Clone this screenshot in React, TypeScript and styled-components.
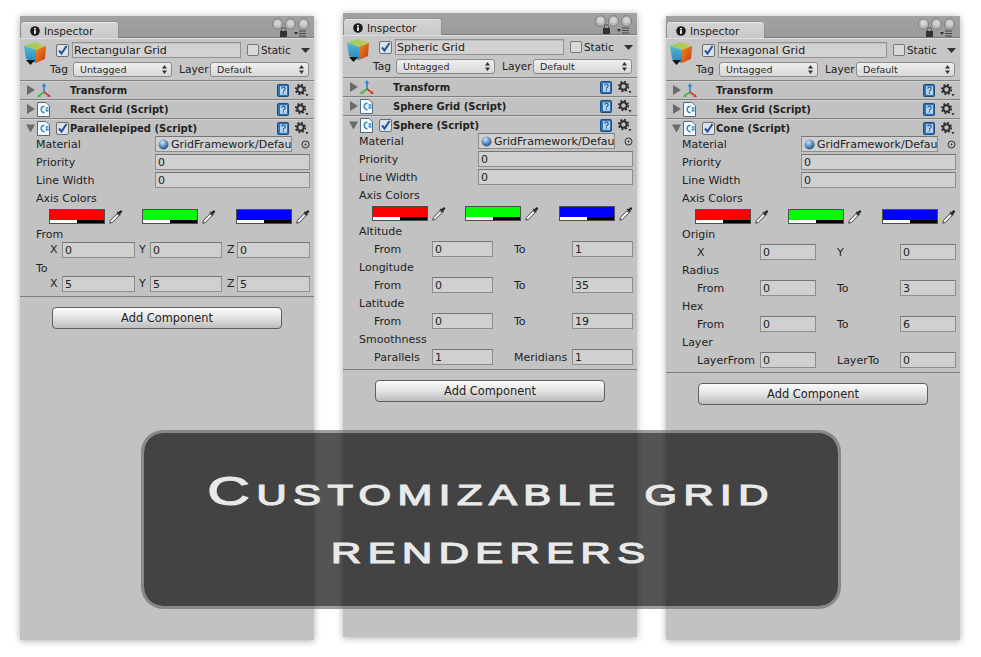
import React from "react";
import styled, { createGlobalStyle } from "styled-components";

const Global = createGlobalStyle`
  html, body { margin: 0; padding: 0; background: #fff; }
  body { font-family: "DejaVu Sans", "Liberation Sans", sans-serif; font-size: 11px; color: #222; }
`;

const Page = styled.div`
  position: relative;
  width: 981px;
  height: 657px;
  overflow: hidden;
  display: flex;
  gap: 29px;
  padding-left: 20px;
  box-sizing: border-box;
`;

const Panel = styled.section<{ $top: number }>`
  width: 294px;
  height: 624px;
  margin-top: ${(p) => p.$top}px;
  background: #c2c2c2;
  box-shadow: 0 1px 7px rgba(0, 0, 0, 0.32);
  flex: none;
  display: flex;
  flex-direction: column;
`;

const TitleBar = styled.header`
  height: 22px;
  flex: none;
  display: flex;
  align-items: flex-end;
  justify-content: space-between;
  padding: 0 4px 0 1px;
  background: linear-gradient(#a2a2a2, #9a9a9a);
  box-shadow: inset 0 -1px 0 #7c7c7c;
`;

const Tab = styled.div`
  width: 97px;
  height: 16px;
  box-sizing: border-box;
  display: flex;
  align-items: center;
  gap: 4px;
  padding: 1px 0 0 9px;
  border-radius: 4px 4px 0 0;
  background: linear-gradient(#d4d4d4, #c9c9c9);
  box-shadow: inset 0 1px 0 #e8e8e8, 0 0 0 0.5px #808080;
  font-size: 10.6px;
`;

const WindowTools = styled.div`
  width: 38px;
  height: 20px;
  align-self: flex-start;
  margin-top: 2px;
`;

const Header = styled.div`
  height: 42px;
  flex: none;
  box-sizing: border-box;
  background: #c6c6c6;
  box-shadow: inset 0 1px 0 #dedede;
  display: grid;
  grid-template-columns: 27px 1fr;
  padding: 4px 5px 0 3px;
`;

const CubeSlot = styled.div`
  margin-top: -1px;
`;

const HeaderMain = styled.div`
  display: flex;
  flex-direction: column;
  gap: 3px;
`;

const HeaderLine = styled.div<{ $pad?: number }>`
  display: flex;
  align-items: center;
  height: 16px;
  padding-left: ${(p) => p.$pad ?? 0}px;
`;

const NameField = styled.div`
  width: 169px;
  height: 16px;
  box-sizing: border-box;
  margin: 0 6px 0 3px;
  padding: 1px 0 0 1px;
  line-height: 14px;
  background: #d2d2d2;
  border: 1px solid #929292;
  box-shadow: inset 0 1px 0 #bdbdbd;
`;

const StaticLabel = styled.span`
  margin-left: 2px;
  font-size: 10.4px;
`;

const Select = styled.div`
  box-sizing: border-box;
  width: 99px;
  height: 15px;
  display: flex;
  align-items: center;
  justify-content: space-between;
  padding: 0 4px 0 6px;
  border: 1px solid #8b8b8b;
  border-radius: 3px;
  background: linear-gradient(#efefef, #d8d8d8);
  font-size: 9.5px;
  color: #2a2a2a;
`;

const HeaderText = styled.span<{ $w: number; $left?: number }>`
  width: ${(p) => p.$w}px;
  margin-left: ${(p) => p.$left ?? 0}px;
  flex: none;
  font-size: 10.6px;
`;

const Fold = styled.div`
  height: 19px;
  box-sizing: border-box;
  flex: none;
  border-top: 1px solid #7f7f7f;
  box-shadow: inset 0 1px 0 #d2d2d2;
  display: flex;
  align-items: center;
  padding: 0 5px 0 6px;
`;

const FoldLabel = styled.strong`
  font-weight: 700;
  font-size: 10px;
  margin-left: 1px;
  flex: 1;
  white-space: nowrap;
`;

const FoldLead = styled.div`
  width: 30px;
  flex: none;
  display: flex;
  align-items: center;
  gap: 2px;
`;

const CheckSlot = styled.span`
  width: 13px;
  height: 13px;
  flex: none;
`;

const Body = styled.div`
  margin-top: -2px;
  padding-right: 4px;
`;

const Row = styled.div`
  height: 18px;
  padding-left: 16px;
  display: flex;
  align-items: center;
  white-space: nowrap;
`;

const PropLabel = styled.span`
  width: 119px;
  flex: none;
`;

const Field = styled.div<{ $w?: number }>`
  ${(p) => (p.$w ? `width: ${p.$w}px; flex: none;` : "min-width: 0;")}
  height: 16px;
  box-sizing: border-box;
  padding: 1px 0 0 2px;
  line-height: 13px;
  background: #d0d0d0;
  border: 1px solid #8d8d8d;
  border-top-color: #767676;
  overflow: hidden;
  display: flex;
  align-items: center;
  gap: 2px;
`;

const SwatchRow = styled.div`
  height: 18px;
  padding-left: 29px;
  display: flex;
  align-items: center;
`;

const SwatchGroup = styled.div`
  width: 93.4px;
  flex: none;
  display: flex;
  align-items: center;
  gap: 4px;
`;

const Swatch = styled.div<{ $color: string }>`
  width: 56px;
  height: 15px;
  box-sizing: border-box;
  border: 1px solid #4e4e4e;
  background: ${(p) => p.$color};
  display: flex;
  align-items: flex-end;
`;

const AlphaBar = styled.div`
  width: 100%;
  height: 3px;
  background: linear-gradient(90deg, #fff 50%, #000 50%);
`;

const Triple = styled.div`
  height: 17px;
  margin-top: -1px;
  padding-left: 30px;
  display: grid;
  grid-template-columns: 12px 73px 15px 72px 15px 73px;
  align-items: start;
`;

const AxisLetter = styled.span<{ $pad?: number }>`
  padding-left: ${(p) => p.$pad ?? 0}px;
  line-height: 16px;
`;

const Pair = styled.div<{ $label: number; $field: number }>`
  height: 18px;
  padding-left: 31px;
  display: grid;
  grid-template-columns: ${(p) => `${p.$label}px ${p.$field}px 21px ${p.$label}px ${p.$field}px`};
  align-items: center;
  white-space: nowrap;
`;

const Divider = styled.hr`
  border: 0;
  height: 1px;
  margin: 3px 0 0;
  background: #7d7d7d;
  flex: none;
`;

const AddButton = styled.button`
  display: block;
  width: 230px;
  height: 22px;
  margin: 10px 0 0 32px;
  box-sizing: border-box;
  border: 1px solid #5f5f5f;
  border-radius: 4px;
  background: linear-gradient(#fbfbfb, #e6e6e6 45%, #bdbdbd);
  font: 11.4px "DejaVu Sans", sans-serif;
  color: #222;
  padding: 0;
`;

const Banner = styled.div`
  position: absolute;
  left: 141px;
  top: 430px;
  width: 700px;
  height: 179px;
  box-sizing: border-box;
  border: 3px solid rgba(100, 100, 100, 0.62);
  border-radius: 22px;
  background-clip: padding-box;
  background-color: rgba(18, 18, 18, 0.72);
  display: flex;
  flex-direction: column;
  align-items: center;
  padding-top: 29px;
`;

const BannerLine = styled.div`
  font-family: "Liberation Sans", sans-serif;
  font-weight: 400;
  font-size: 41px;
  line-height: 58px;
  font-variant: small-caps;
  color: #e9e9e9;
  -webkit-text-stroke: 1.2px #e9e9e9;
  letter-spacing: 4.5px;
  white-space: nowrap;
  transform: scaleX(1.44);
  transform-origin: center;
`;

const Foldout = ({ open }: { open?: boolean }) => (
  <svg width="9" height="10" viewBox="0 0 9 10" style={{ flex: "none" }}>
    {open ? <path d="M0 1.5h9L4.5 9.5z" fill="#6a6a6a" /> : <path d="M1 0v10l8-5z" fill="#6a6a6a" />}
  </svg>
);

const InfoIcon = () => (
  <svg width="10" height="10" viewBox="0 0 10 10">
    <circle cx="5" cy="5" r="4.8" fill="#1c1c1c" />
    <rect x="4.1" y="4.2" width="1.8" height="3.6" fill="#fff" />
    <rect x="4.1" y="2" width="1.8" height="1.5" fill="#fff" />
  </svg>
);

const Tools = () => (
  <svg width="38" height="20" viewBox="0 0 38 20">
    {[5.5, 18.5, 31.5].map((x) => (
      <g key={x}>
        <circle cx={x} cy="6" r="5.2" fill="#b8b8b8" stroke="#7e7e7e" />
        <circle cx={x} cy="5" r="3" fill="#d2d2d2" />
      </g>
    ))}
    <rect x="8" y="13" width="7" height="6" fill="#333" />
    <path d="M9.5 13v-1.5a2 2 0 0 1 4 0V13" fill="none" stroke="#555" />
    <path d="M22 14h4l-2 3z" fill="#333" />
    <path d="M27 13h7M27 15.5h7M27 18h7" stroke="#444" />
  </svg>
);

const Cube = () => (
  <svg width="24" height="26" viewBox="0 0 24 26">
    <defs>
      <linearGradient id="cl" x1="0" y1="0" x2="0" y2="1">
        <stop offset="0" stopColor="#4fb7d8" />
        <stop offset="1" stopColor="#2b82c0" />
      </linearGradient>
      <linearGradient id="cr" x1="0" y1="0" x2="1" y2="1">
        <stop offset="0" stopColor="#f08a1e" />
        <stop offset="1" stopColor="#c43a12" />
      </linearGradient>
      <linearGradient id="ct" x1="0" y1="0" x2="1" y2="0">
        <stop offset="0" stopColor="#8fce5e" />
        <stop offset="1" stopColor="#c9c85a" />
      </linearGradient>
    </defs>
    <path d="M1 5 12 1l11 4-10 4z" fill="url(#ct)" />
    <path d="M1 5l12 4v13L3 18z" fill="url(#cl)" />
    <path d="M23 5 13 9v13l9-4z" fill="url(#cr)" />
    <path d="M3 19h9l-4.5 5z" fill="#111" />
  </svg>
);

const Check = ({ on = true }: { on?: boolean }) => (
  <svg width={on ? 13 : 12} height={on ? 13 : 12} viewBox="0 0 13 13" style={{ flex: "none" }}>
    <rect x="0.5" y="0.5" width="12" height="12" rx="1.5" fill={on ? "#d9e3ee" : "#d8d8d8"} stroke="#6d6d6d" />
    {on && <path d="M3 6.5l2.5 3L10.5 2" fill="none" stroke="#26538f" strokeWidth="2" />}
  </svg>
);

const UpDown = () => (
  <svg width="5" height="9" viewBox="0 0 5 9">
    <path d="M2.5 0 5 3.4H0zM2.5 9 0 5.6h5z" fill="#333" />
  </svg>
);

const DownTri = () => (
  <svg width="9" height="5" viewBox="0 0 9 5" style={{ marginLeft: 10, flex: "none" }}>
    <path d="M0 0h9L4.5 5z" fill="#333" />
  </svg>
);

const TransformIcon = () => (
  <svg width="14" height="15" viewBox="0 0 14 15">
    <path d="M7 9V2" stroke="#2c7fd8" strokeWidth="1.6" />
    <path d="M7 0 4.8 3.5h4.4z" fill="#2c7fd8" />
    <path d="M7 9l-4 3" stroke="#3cb53c" strokeWidth="1.6" />
    <path d="M0 14l4-.2-2.2-3z" fill="#3cb53c" />
    <path d="M7 9l4 3" stroke="#d8352c" strokeWidth="1.6" />
    <path d="M14 14l-4-.2 2.2-3z" fill="#d8352c" />
  </svg>
);

const ScriptIcon = () => (
  <svg width="13" height="15" viewBox="0 0 13 15" style={{ flex: "none" }}>
    <path d="M.5.5h8.5l3.500 3.500V14.500H.5z" fill="#f6f8fa" stroke="#4e6b85" />
    <path d="M7.500 4.200a3 3 0 1 0 0 6.600" fill="none" stroke="#2c8bd0" strokeWidth="1.500" />
    <path d="M8.500 6h3M8.500 8.500h3M9.300 5v5M10.800 5v5" stroke="#2c8bd0" strokeWidth="0.800" />
  </svg>
);

const HelpIcon = () => (
  <svg width="12" height="13" viewBox="0 0 12 13" style={{ flex: "none" }}>
    <rect x="0.5" y="0.5" width="11" height="12" rx="1" fill="#2d73b5" stroke="#1f4d7c" />
    <rect x="3" y="2.300" width="7" height="8.500" fill="#b7d4ef" />
    <path d="M4.800 4.800a1.700 1.700 0 1 1 2.400 1.500c-.7.400-.8.700-.8 1.200" fill="none" stroke="#1f4d7c" strokeWidth="1.100" />
    <rect x="5.800" y="8.300" width="1.200" height="1.200" fill="#1f4d7c" />
  </svg>
);

const Gear = () => (
  <svg width="14" height="13" viewBox="0 0 14 13" style={{ marginLeft: 6, flex: "none" }}>
    <circle cx="5.500" cy="5.500" r="3.200" fill="none" stroke="#2b2b2b" strokeWidth="2" />
    <circle cx="5.500" cy="5.500" r="4.800" fill="none" stroke="#2b2b2b" strokeWidth="1.700" strokeDasharray="1.900 1.870" />
    <path d="M10.500 10h3l-1.500 2.500z" fill="#2b2b2b" />
  </svg>
);

const Dropper = () => (
  <svg width="14" height="15" viewBox="0 0 14 15" style={{ flex: "none" }}>
    <path d="M.8 14.200 1.400 11.400 8 4.800l2 2-6.600 6.600z" fill="#f6f6f6" stroke="#333" strokeWidth="0.900" />
    <path d="M7.600 3.600l1-1 .8.700 1.700-1.900c1-.9 2.800.7 1.900 1.800l-1.900 1.900.7.700-1 1z" fill="#262626" />
  </svg>
);

const Sphere = () => (
  <svg width="11" height="11" viewBox="0 0 11 11" style={{ flex: "none" }}>
    <defs>
      <radialGradient id="sph" cx="0.4" cy="0.3" r="0.8">
        <stop offset="0" stopColor="#cfe3f5" />
        <stop offset="0.6" stopColor="#4a7fb5" />
        <stop offset="1" stopColor="#1f3f66" />
      </radialGradient>
    </defs>
    <circle cx="5.500" cy="5.500" r="5" fill="url(#sph)" />
  </svg>
);

const Target = () => (
  <svg width="9" height="9" viewBox="0 0 9 9" style={{ marginLeft: 9, flex: "none" }}>
    <circle cx="4.500" cy="4.500" r="3.500" fill="none" stroke="#333" />
    <circle cx="4.500" cy="4.500" r="1" fill="#333" />
  </svg>
);

const FoldRow = ({ name, icon, open, check }: { name: string; icon: React.ReactNode; open?: boolean; check?: boolean }) => (
  <Fold>
    <FoldLead>
      <Foldout open={open} />
      {icon}
    </FoldLead>
    {check ? <Check /> : <CheckSlot />}
    <FoldLabel>{name}</FoldLabel>
    <HelpIcon />
    <Gear />
  </Fold>
);

const PairRow = ({ a, av, b, bv, label, field }: { a: string; av: string; b: string; bv: string; label: number; field: number }) => (
  <Pair $label={label} $field={field}>
    <span>{a}</span>
    <Field>{av}</Field>
    <span />
    <span>{b}</span>
    <Field>{bv}</Field>
  </Pair>
);

const Common = () => (
  <>
    <Row>
      <PropLabel>Material</PropLabel>
      <Field $w={137}>
        <Sphere />
        GridFramework/Defau
      </Field>
      <Target />
    </Row>
    <Row>
      <PropLabel>Priority</PropLabel>
      <Field $w={155}>0</Field>
    </Row>
    <Row>
      <PropLabel>Line Width</PropLabel>
      <Field $w={155}>0</Field>
    </Row>
    <Row>Axis Colors</Row>
    <SwatchRow>
      {["#ff0000", "#00ff00", "#0000ff"].map((c) => (
        <SwatchGroup key={c}>
          <Swatch $color={c}>
            <AlphaBar />
          </Swatch>
          <Dropper />
        </SwatchGroup>
      ))}
    </SwatchRow>
  </>
);

const PanelFrame = ({
  top,
  name,
  script,
  comp,
  children,
}: {
  top: number;
  name: string;
  script: string;
  comp: string;
  children: React.ReactNode;
}) => (
  <Panel $top={top}>
    <TitleBar>
      <Tab>
        <InfoIcon />
        Inspector
      </Tab>
      <WindowTools>
        <Tools />
      </WindowTools>
    </TitleBar>
    <Header>
      <CubeSlot>
        <Cube />
      </CubeSlot>
      <HeaderMain>
        <HeaderLine $pad={6}>
          <Check />
          <NameField>{name}</NameField>
          <Check on={false} />
          <StaticLabel>Static</StaticLabel>
          <DownTri />
        </HeaderLine>
        <HeaderLine>
          <HeaderText $w={23}>Tag</HeaderText>
          <Select>
            Untagged
            <UpDown />
          </Select>
          <HeaderText $w={31} $left={7}>Layer</HeaderText>
          <Select>
            Default
            <UpDown />
          </Select>
        </HeaderLine>
      </HeaderMain>
    </Header>
    <FoldRow name="Transform" icon={<TransformIcon />} />
    <FoldRow name={script} icon={<ScriptIcon />} />
    <FoldRow name={comp} icon={<ScriptIcon />} open check />
    <Body>
      <Common />
      {children}
    </Body>
    <Divider />
    <AddButton>Add Component</AddButton>
  </Panel>
);

export default function App() {
  return (
    <Page>
      <Global />
      <PanelFrame top={16} name="Rectangular Grid" script="Rect Grid (Script)" comp="Parallelepiped (Script)">
        <Row>From</Row>
        <Triple>
          <AxisLetter>X</AxisLetter>
          <Field>0</Field>
          <AxisLetter $pad={4}>Y</AxisLetter>
          <Field>0</Field>
          <AxisLetter $pad={5}>Z</AxisLetter>
          <Field>0</Field>
        </Triple>
        <Row>To</Row>
        <Triple>
          <AxisLetter>X</AxisLetter>
          <Field>5</Field>
          <AxisLetter $pad={4}>Y</AxisLetter>
          <Field>5</Field>
          <AxisLetter $pad={5}>Z</AxisLetter>
          <Field>5</Field>
        </Triple>
      </PanelFrame>
      <PanelFrame top={13} name="Spheric Grid" script="Sphere Grid (Script)" comp="Sphere (Script)">
        <Row>Altitude</Row>
        <PairRow label={58} field={61} a="From" av="0" b="To" bv="1" />
        <Row>Longitude</Row>
        <PairRow label={58} field={61} a="From" av="0" b="To" bv="35" />
        <Row>Latitude</Row>
        <PairRow label={58} field={61} a="From" av="0" b="To" bv="19" />
        <Row>Smoothness</Row>
        <PairRow label={58} field={61} a="Parallels" av="1" b="Meridians" bv="1" />
      </PanelFrame>
      <PanelFrame top={16} name="Hexagonal Grid" script="Hex Grid (Script)" comp="Cone (Script)">
        <Row>Origin</Row>
        <PairRow label={63} field={56} a="X" av="0" b="Y" bv="0" />
        <Row>Radius</Row>
        <PairRow label={63} field={56} a="From" av="0" b="To" bv="3" />
        <Row>Hex</Row>
        <PairRow label={63} field={56} a="From" av="0" b="To" bv="6" />
        <Row>Layer</Row>
        <PairRow label={63} field={56} a="LayerFrom" av="0" b="LayerTo" bv="0" />
      </PanelFrame>
      <Banner>
        <BannerLine>Customizable grid</BannerLine>
        <BannerLine>renderers</BannerLine>
      </Banner>
    </Page>
  );
}
